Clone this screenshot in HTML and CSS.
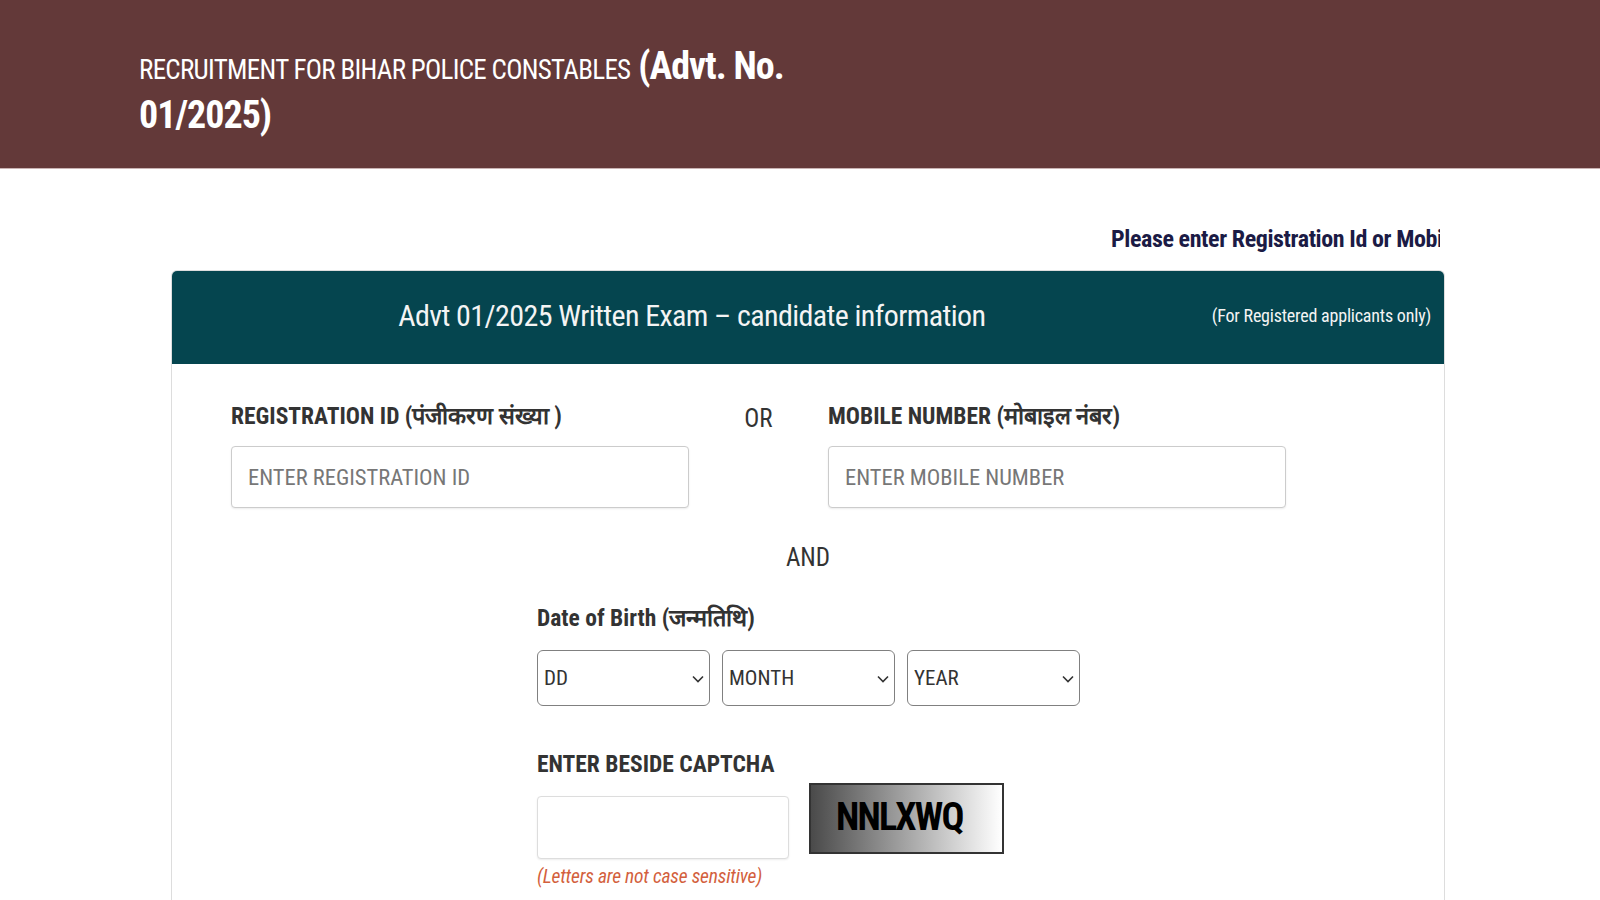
FILE: index.html
```html
<!DOCTYPE html>
<html lang="en">
<head>
    <meta charset="UTF-8">
    <meta name="viewport" content="width=device-width, initial-scale=1.0">
    <title>Bihar Police Constables - Candidate Information</title>
    <link rel="stylesheet" href="styles.css">
</head>
<body>

<header class="top-bar">
    <h1 class="page-title">
        <span class="title-small">RECRUITMENT FOR BIHAR POLICE CONSTABLES</span>
        (Advt. No. 01/2025)
    </h1>
</header>

<main class="wrap">
    <!-- scrolling notice -->
    <div class="notice">
        <span>Please enter Registration Id or Mobile Number and Date of Birth to view your information</span>
    </div>

    <div class="card">
        <div class="card-head">
            <h2>Advt 01/2025 Written Exam – candidate information</h2>
            <span class="card-note">(For Registered applicants only)</span>
        </div>

        <div class="card-body">
            <div class="id-row">
                <div class="field">
                    <label for="regId">REGISTRATION ID (पंजीकरण संख्या )</label>
                    <input type="text" id="regId" placeholder="ENTER REGISTRATION ID">
                </div>
                <div class="or">OR</div>
                <div class="field">
                    <label for="mobile">MOBILE NUMBER (मोबाइल नंबर)</label>
                    <input type="text" id="mobile" placeholder="ENTER MOBILE NUMBER">
                </div>
            </div>

            <div class="and">AND</div>

            <div class="block">
                <label>Date of Birth (जन्मतिथि)</label>
                <div class="dob">
                    <div class="select-box">
                        <select id="dd"><option>DD</option></select>
                        <svg class="chev" width="12" height="8" viewBox="0 0 12 8"><path d="M1 1.5 L6 6.5 L11 1.5" fill="none" stroke="#333" stroke-width="1.6"/></svg>
                    </div>
                    <div class="select-box">
                        <select id="mm"><option>MONTH</option></select>
                        <svg class="chev" width="12" height="8" viewBox="0 0 12 8"><path d="M1 1.5 L6 6.5 L11 1.5" fill="none" stroke="#333" stroke-width="1.6"/></svg>
                    </div>
                    <div class="select-box">
                        <select id="yy"><option>YEAR</option></select>
                        <svg class="chev" width="12" height="8" viewBox="0 0 12 8"><path d="M1 1.5 L6 6.5 L11 1.5" fill="none" stroke="#333" stroke-width="1.6"/></svg>
                    </div>
                </div>

                <label class="captcha-label" for="captcha">ENTER BESIDE CAPTCHA</label>
                <div class="captcha-row">
                    <div class="captcha-col">
                        <input type="text" id="captcha" class="captcha-input">
                        <p class="hint">(Letters are not case sensitive)</p>
                    </div>
                    <div class="captcha-img">NNLXWQ</div>
                </div>
            </div>
        </div>
    </div>
</main>

</body>
</html>
```

FILE: styles.css
```css
body {
    font-family: "Roboto Condensed", "Liberation Sans", sans-serif;
    background-color: #fff;
    color: #333;
    margin: 0;
    padding: 0;
}

/* Top brown bar */
.top-bar {
    background-color: #633939;
    padding: 42px 139px 28px;
    border-bottom: 1px solid #c9b3b3;
}
.page-title {
    width: 720px;
    margin: 0;
    color: #fff;
    font-size: 38px;
    font-weight: bold;
    line-height: 49px;
    letter-spacing: -1px;
}
.title-small {
    font-size: 27px;
    font-weight: normal;
    line-height: 1;
    letter-spacing: -0.7px;
}

.wrap {
    width: 1274px;
    margin: 0 0 0 171px;
    padding-top: 55px;
}

/* Marquee style notice */
.notice {
    margin-right: 5px;
    padding-left: 940px;
    overflow: hidden;
    white-space: nowrap;
    color: #1b1b45;
    font-size: 24px;
    font-weight: bold;
    line-height: 30px;
    letter-spacing: -0.4px;
}

.card {
    margin-top: 16px;
    border: 1px solid #ddd;
    border-bottom: none;
    border-radius: 6px 6px 0 0;
}
.card-head {
    display: flex;
    align-items: center;
    height: 93px;
    padding: 0 13px 3px 0;
    box-sizing: border-box;
    background-color: #05454f;
    border-radius: 5px 5px 0 0;
    color: #f4f4f4;
}
.card-head h2 {
    flex: 1;
    margin: 0;
    text-align: center;
    font-size: 30px;
    font-weight: normal;
    line-height: 36px;
    letter-spacing: -0.6px;
}
.card-note {
    font-size: 18px;
    line-height: 24px;
    letter-spacing: -0.2px;
}

.card-body {
    padding: 38px 0 60px 59px;
}
label {
    display: block;
    font-size: 23.5px;
    font-weight: bold;
    line-height: 28px;
    color: #333;
}
.id-row {
    display: flex;
}
.field {
    width: 458px;
}
.field label {
    margin-bottom: 16px;
}
.field input {
    width: 100%;
    height: 62px;
    box-sizing: border-box;
    padding: 0 16px;
    border: 1px solid #ccc;
    border-radius: 4px;
    box-shadow: 0 1px 2px rgba(0, 0, 0, 0.08);
    font-family: inherit;
    font-size: 22.5px;
    color: #333;
}
.field input::placeholder {
    color: #777;
}
.or {
    width: 139px;
    text-align: center;
    font-size: 25px;
    line-height: 28px;
    padding-top: 3px;
}
.and {
    margin: 35px 0 0 -59px;
    text-align: center;
    font-size: 25px;
    line-height: 30px;
}

.block {
    width: 543px;
    margin: 31px 0 0 306px;
}
.dob {
    display: flex;
    gap: 12px;
    margin-top: 18px;
}
.select-box {
    position: relative;
    flex: 1;
}
.select-box select {
    width: 100%;
    height: 56px;
    padding: 0 6px;
    border: 1.5px solid #808080;
    border-radius: 6px;
    background-color: #fff;
    font-family: inherit;
    font-size: 21px;
    color: #333;
    appearance: none;
}
.chev {
    position: absolute;
    right: 6px;
    top: 25px;
    pointer-events: none;
}

.captcha-label {
    margin-top: 44px;
}
.captcha-row {
    display: flex;
    gap: 20px;
    margin-top: 5px;
}
.captcha-col {
    width: 252px;
}
.captcha-input {
    display: block;
    width: 252px;
    height: 63px;
    margin-top: 13px;
    box-sizing: border-box;
    border: 1px solid #ddd;
    border-radius: 4px;
    box-shadow: 0 1px 2px rgba(0, 0, 0, 0.08);
}
.hint {
    margin: 6px 0 0;
    color: #d35f3d;
    font-size: 19.5px;
    font-style: italic;
    line-height: 24px;
    letter-spacing: -0.2px;
    white-space: nowrap;
}
.captcha-img {
    display: flex;
    align-items: center;
    width: 195px;
    height: 71px;
    box-sizing: border-box;
    padding: 0 0 3px 25px;
    border: 2px solid #333;
    background: linear-gradient(to right, #4a4a4a, #fff);
    color: #000;
    font-size: 38px;
    font-weight: bold;
    letter-spacing: -1.8px;
}
```
